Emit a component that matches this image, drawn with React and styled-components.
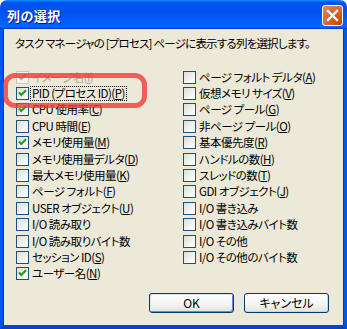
import styled, { createGlobalStyle } from "styled-components";

const GlobalStyle = createGlobalStyle`
html, body {
margin:0;
padding:0;
background:#ffffff;
}
#root {
width:347px;
height:329px;
}
`;

const leftItems = [
  { label: "イメージ名", key: "I", checked: true, disabled: true },
  { label: "PID (プロセス ID)", key: "P", checked: true, focus: true },
  { label: "CPU 使用率", key: "C", checked: true },
  { label: "CPU 時間", key: "E" },
  { label: "メモリ使用量", key: "M", checked: true },
  { label: "メモリ使用量デルタ", key: "D" },
  { label: "最大メモリ使用量", key: "K" },
  { label: "ページ フォルト", key: "F" },
  { label: "USER オブジェクト", key: "U" },
  { label: "I/O 読み取り" },
  { label: "I/O 読み取りバイト数" },
  { label: "セッション ID", key: "S" },
  { label: "ユーザー名", key: "N", checked: true },
];

const rightItems = [
  { label: "ページ フォルト デルタ", key: "A" },
  { label: "仮想メモリ サイズ", key: "V" },
  { label: "ページ プール", key: "G" },
  { label: "非ページ プール", key: "O" },
  { label: "基本優先度", key: "R" },
  { label: "ハンドルの数", key: "H" },
  { label: "スレッドの数", key: "T" },
  { label: "GDI オブジェクト", key: "J" },
  { label: "I/O 書き込み" },
  { label: "I/O 書き込みバイト数" },
  { label: "I/O その他" },
  { label: "I/O その他のバイト数" },
];

function Check({ item }) {
  return (
    <Row>
      <Box $disabled={item.disabled}>
        {item.checked && (
          <svg width="11" height="11" viewBox="0 0 11 11">
            <path d="M2 4.5 L4.3 7 L9 2.2" fill="none" stroke={item.disabled ? "#aca899" : "#21a121"} strokeWidth="2.2" />
          </svg>
        )}
      </Box>
      <Label $disabled={item.disabled} $focus={item.focus}>
        {item.label}
        {item.key && (
          <>
            (<u>{item.key}</u>)
          </>
        )}
      </Label>
    </Row>
  );
}

function App() {
  return (
    <>
      <GlobalStyle />
      <Window>
        <TitleBar>
          <Title>列の選択</Title>
          <CloseButton>
            <svg width="13" height="13" viewBox="0 0 13 13">
              <path d="M2 2 L11 11 M11 2 L2 11" stroke="#fff" strokeWidth="2.4" strokeLinecap="square" />
            </svg>
          </CloseButton>
        </TitleBar>
        <Body>
          <Instruction>タスク マネージャの [プロセス] ページに表示する列を選択します。</Instruction>
          <Columns>
            <Column>
              {leftItems.map((item) => (
                <Check key={item.label} item={item} />
              ))}
            </Column>
            <Column>
              {rightItems.map((item) => (
                <Check key={item.label} item={item} />
              ))}
            </Column>
          </Columns>
          <ButtonRow>
            <Button $default>OK</Button>
            <Button>キャンセル</Button>
          </ButtonRow>
        </Body>
        <Highlight />
      </Window>
    </>
  );
}

const Window = styled.div`
position:relative;
width:347px;
height:329px;
display:flex;
flex-direction:column;
font-family:"Noto Sans CJK JP", "Noto Sans", sans-serif;
font-feature-settings:"palt";
font-size:12px;
color:#000;
`;

const TitleBar = styled.div`
height:29px;
flex-shrink:0;
display:flex;
align-items:center;
justify-content:space-between;
padding:0 4px 0 7px;
border-radius:7px 7px 0 0;
background:linear-gradient(to bottom, #0997ff 0%, #0053ee 8%, #0050ee 40%, #0066ff 88%, #0066ff 93%, #005bff 95%, #003dd7 96%, #003dd7 100%);
`;

const Title = styled.span`
color:#fff;
font-weight:bold;
font-size:13px;
letter-spacing:0.5px;
text-shadow:1px 1px #0f1089;
margin-top:1px;
`;

const CloseButton = styled.div`
width:21px;
height:21px;
box-sizing:border-box;
border:1px solid #fff;
border-radius:3px;
display:flex;
align-items:center;
justify-content:center;
background:radial-gradient(circle at 90% 90%, #cc4600 0%, #dc6527 55%, #cd7546 68%, #e8866a 100%);
margin-top:1px;
`;

const Body = styled.div`
flex:1;
min-height:0;
display:flex;
flex-direction:column;
background:#ece9d8;
border-left:3px solid #0055ea;
border-right:3px solid #0055ea;
border-bottom:4px solid #0044cc;
box-shadow:inset 1px 0 #0831d9, inset -1px 0 #0831d9;
padding:7px 0 0 12px;
`;

const Instruction = styled.div`
height:14px;
font-size:11.5px;
line-height:14px;
white-space:nowrap;
letter-spacing:-0.8px;
`;

const Columns = styled.div`
display:grid;
grid-template-columns:167px 1fr;
margin-top:19px;
padding-left:1px;
`;

const Column = styled.div`
display:flex;
flex-direction:column;
`;

const Row = styled.div`
height:16.4px;
display:flex;
align-items:center;
`;

const Box = styled.div`
width:13px;
height:13px;
box-sizing:border-box;
border:1px solid ${(p) => (p.$disabled ? "#cac8bb" : "#1c5180")};
background:${(p) => (p.$disabled ? "#f4f3ee" : "linear-gradient(135deg, #dcdcd7 0%, #ffffff 90%)")};
display:flex;
align-items:center;
justify-content:center;
margin-right:2px;
flex-shrink:0;
`;

const Label = styled.span`
font-size:11.5px;
letter-spacing:-0.5px;
line-height:13px;
white-space:nowrap;
color:${(p) => (p.$disabled ? "#aca899" : "#000")};
outline:${(p) => (p.$focus ? "1px dotted #000" : "none")};
outline-offset:0;
padding:0 1px;
`;

const ButtonRow = styled.div`
display:flex;
justify-content:flex-end;
gap:10px;
margin-top:11px;
padding-right:15px;
`;

const Button = styled.button`
width:85px;
height:20px;
box-sizing:border-box;
border:1px solid #003c74;
border-radius:3px;
background:linear-gradient(to bottom, #ffffff 0%, #f3f3ef 60%, #e3e2da 100%);
box-shadow:${(p) => (p.$default ? "inset 1px 1px #cee7ff, inset -1px -1px #6982ee" : "inset -1px -1px #d6d0c5")};
font-family:inherit;
font-feature-settings:"palt";
font-size:12px;
line-height:16px;
color:#000;
padding:0;
`;

const Highlight = styled.div`
position:absolute;
left:3px;
top:73px;
width:144px;
height:35px;
box-sizing:border-box;
border:5px solid rgba(244, 52, 52, 0.78);
border-radius:12px;
pointer-events:none;
`;

export default App;
